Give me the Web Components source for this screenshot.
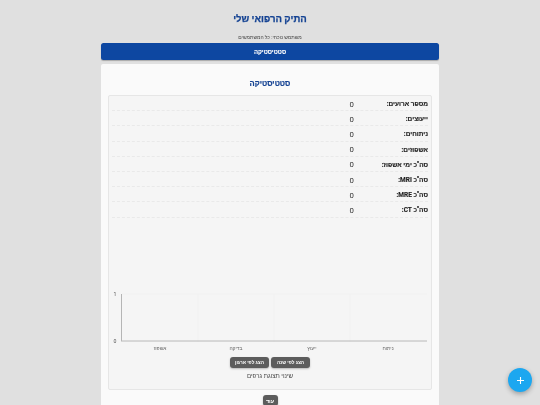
<!DOCTYPE html>
<html lang="he" dir="rtl"><head><meta charset="utf-8">
<style>
html,body{margin:0;height:405px;overflow:hidden;background:#e0e0e0;font-family:"Liberation Sans","Noto Sans",sans-serif}
</style></head><body>
<med-app></med-app><fab-add></fab-add>
<script>
const F='"Roboto","Liberation Sans",sans-serif';
function def(n,html){customElements.define(n,class extends HTMLElement{constructor(){super();this.attachShadow({mode:'open'}).innerHTML=html;}})}
def('stat-row',`<style>:host{display:grid;grid-template-columns:74px auto;box-sizing:border-box;align-items:center;height:15.2px;padding-top:2px;border-bottom:1px dashed #e9e9e9;direction:rtl;margin:0 3px;font:6.5px ${F};color:#222}
.l{font-weight:700;text-align:right;-webkit-text-stroke:.15px #222}.v{color:#333;font-size:7.8px;text-align:right}</style><span class="l"><slot name="l"></slot></span><span class="v"><slot name="v"></slot></span>`);
def('dark-btn',`<style>:host{display:inline-flex;align-items:center;justify-content:center;box-sizing:border-box;background:#5c5c5c;color:#fff;border-radius:3px;height:11px;width:var(--w,39px);font:700 var(--fs,4.8px) ${F};white-space:nowrap;box-shadow:0 1px 2px rgba(0,0,0,.25)}</style><slot></slot>`);
def('bar-chart',`<style>:host{display:block;height:62px;direction:ltr}
svg{display:block}text{font-family:${F}}</style>
<svg width="322" height="62" viewBox="0 0 322 62">
<g stroke="#ececec" stroke-width=".5"><line x1="13" y1="3" x2="318" y2="3"/><line x1="89" y1="3" x2="89" y2="51"/><line x1="165" y1="3" x2="165" y2="51"/><line x1="241" y1="3" x2="241" y2="51"/></g>
<line x1="12.5" y1="3" x2="12.5" y2="50" stroke="#a5a5a5" stroke-width=".8"/><line x1="12" y1="50" x2="318" y2="50" stroke="#b8b8b8" stroke-width="1"/>
<g fill="#555" font-size="5.2"><text x="4.5" y="4.8">1</text><text x="4.5" y="52">0</text></g>
<g fill="#666" font-size="5" text-anchor="middle" direction="rtl"><text x="51" y="59">אשפוז</text><text x="127" y="59">בדיקה</text><text x="203" y="59">ייעוץ</text><text x="279" y="59">ניתוח</text></g>
</svg>`);
def('stats-panel',`<style>:host{display:block;background:#f5f5f5;border:1px solid #e6e6e6;border-radius:2px;margin:0 7px;height:295px;box-sizing:border-box}
.rows{height:195px}.btns{display:flex;justify-content:center;gap:2px;margin-top:4px;direction:rtl}.cap{text-align:center;font:6.2px/8px ${F};color:#444;margin-top:4px}</style>
<div class="rows"><slot></slot></div><slot name="chart"></slot>
<div class="btns"><slot name="btn"></slot></div><div class="cap"><slot name="cap"></slot></div>`);
def('fab-add',`<style>:host{position:fixed;right:8px;bottom:13px;width:24px;height:24px;border-radius:50%;background:#1ca7f0;box-shadow:0 2px 5px rgba(0,0,0,.3);display:flex;align-items:center;justify-content:center}</style><svg width="7" height="7" viewBox="0 0 7 7"><path d="M3.5 0v7M0 3.5h7" stroke="#fff" stroke-width="1.1"/></svg>`);
def('med-app',`<style>:host{display:block;width:338px;margin:0 auto;direction:rtl;font-family:${F};filter:blur(.2px)}
h1{margin:0;padding-top:12px;height:22px;font:700 9.6px/13px ${F};color:#154393;-webkit-text-stroke:.25px #154393;text-align:center}
.u{text-align:center;font:5px/7px ${F};color:#444;height:9px}
.tab{background:#0d47a1;color:#fff;height:16.5px;border-radius:2.5px;display:flex;align-items:center;justify-content:center;font:700 6px ${F};-webkit-text-stroke:.1px #fff;box-shadow:0 1px 1px rgba(0,0,0,.25)}
.card{background:#fafafa;border-radius:2px;margin-top:4.5px;height:345px}
h2{margin:0;padding-top:14px;height:17px;font:700 7.6px/11px ${F};color:#154393;-webkit-text-stroke:.2px #154393;text-align:center}
.more{display:flex;justify-content:center;margin-top:5px;--w:15px;--fs:5.5px}</style>
<h1>התיק הרפואי שלי</h1><div class="u">משתמש נוכחי: כל המשתמשים</div><div class="tab">סטטיסטיקה</div>
<div class="card"><h2>סטטיסטיקה</h2><slot></slot><div class="more"><slot name="more"></slot></div></div>`);
const rows=[['מספר ארועים:','0'],['ייעוצים:','0'],['ניתוחים:','0'],['אשפוזים:','0'],['סה"כ ימי אשפוז:','0'],['סה"כ MRI:','0'],['סה"כ MRE:','0'],['סה"כ CT:','0']];
const app=document.querySelector('med-app');
app.innerHTML=`<stats-panel>${rows.map(r=>`<stat-row><span slot="l">${r[0]}</span><span slot="v">${r[1]}</span></stat-row>`).join('')}
<bar-chart slot="chart"></bar-chart><dark-btn slot="btn">הצג לפי שנה</dark-btn><dark-btn slot="btn">הצג לפי ארגון</dark-btn><span slot="cap">שינוי תצוגת גרפים</span></stats-panel>
<dark-btn slot="more">עוד</dark-btn>`;
</script></body></html>
